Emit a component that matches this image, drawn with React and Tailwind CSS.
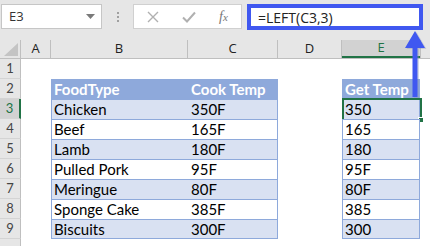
import React from "react";

const rows = [
  { food: "Chicken", cook: "350F", get: "350" },
  { food: "Beef", cook: "165F", get: "165" },
  { food: "Lamb", cook: "180F", get: "180" },
  { food: "Pulled Pork", cook: "95F", get: "95F" },
  { food: "Meringue", cook: "80F", get: "80F" },
  { food: "Sponge Cake", cook: "385F", get: "385" },
  { food: "Biscuits", cook: "300F", get: "300" },
];

const cols = [
  { key: "A", w: "w-[30px]" },
  { key: "B", w: "w-[137px]" },
  { key: "C", w: "w-[90px]" },
  { key: "D", w: "w-[64px]" },
  { key: "E", w: "w-[78px]" },
];

const RowHead = ({ n }) => (
  <div
    className={`w-[21px] h-[20px] shrink-0 flex items-center justify-center text-[13px] border-b border-[#d4d4d4] ${
      n === 3
        ? "bg-[#d2d2d2] border-r-2 border-r-[#217346] text-[#217346]"
        : "bg-[#e6e6e6] border-r border-r-[#bfbfbf] text-[#444]"
    }`}
  >
    {n}
  </div>
);

export default function App() {
  return (
    <div className="relative w-[430px] h-[246px] overflow-hidden bg-white font-['Open_Sans',sans-serif]">
      {/* Formula bar */}
      <div className="h-[40px] bg-[#e6e6e6] flex items-start pt-[4px] pl-[1px]">
        <div className="w-[101px] h-[25px] bg-white border border-[#c6c6c6] flex items-center justify-between pl-[7px] pr-[6px]">
          <span className="text-[13px] text-[#333]">E3</span>
          <svg width="9" height="5" viewBox="0 0 9 5">
            <path d="M0 0h9L4.5 5z" fill="#7a7a7a" />
          </svg>
        </div>
        <div className="w-[31px] h-[25px] flex flex-col items-center justify-center gap-[2px]">
          <span className="w-[2px] h-[2px] bg-[#a0a0a0]" />
          <span className="w-[2px] h-[2px] bg-[#a0a0a0]" />
          <span className="w-[2px] h-[2px] bg-[#a0a0a0]" />
        </div>
        <div className="w-[109px] h-[25px] bg-white border border-[#d0d0d0] flex items-center pl-[13px] gap-[23px]">
          <svg width="12" height="12" viewBox="0 0 12 12">
            <path d="M1 1l10 10M11 1L1 11" stroke="#b0b0b0" strokeWidth="1.4" />
          </svg>
          <svg width="14" height="12" viewBox="0 0 14 12">
            <path d="M1 6.5l4 4L13 1.5" stroke="#b0b0b0" strokeWidth="2" fill="none" />
          </svg>
          <span className="text-[14px] italic text-[#777] font-['Liberation_Serif',serif]">
            f<span className="text-[11px]">x</span>
          </span>
        </div>
        <div className="ml-[5px] w-[176px] h-[26px] bg-white border-[4px] border-[#4058f0] flex items-center pl-[7px]">
          <span className="text-[14px] text-[#222]">=LEFT(C3,3)</span>
        </div>
      </div>

      {/* Column headers */}
      <div className="flex h-[19px] bg-[#e6e6e6] border-b border-[#bfbfbf]">
        <div className="w-[21px] shrink-0 flex items-end justify-end border-r border-[#bfbfbf] pr-[2px] pb-[2px]">
          <svg width="14" height="13" viewBox="0 0 14 13">
            <path d="M14 0V13H0z" fill="#c4c4c4" />
          </svg>
        </div>
        {cols.map((c) => (
          <div
            key={c.key}
            className={`${c.w} shrink-0 flex items-center justify-center text-[13px] ${
              c.key === "E"
                ? "bg-[#d2d2d2] border-b-2 border-[#217346] text-[#217346]"
                : "border-r border-[#bfbfbf] text-[#222]"
            }`}
          >
            {c.key}
          </div>
        ))}
        <div className="flex-1 border-l border-[#bfbfbf]" />
      </div>

      {/* Rows */}
      <div className="flex flex-col font-['Lato',sans-serif] text-[15px] text-black">
        <div className="flex">
          <RowHead n={1} />
        </div>
        <div className="flex">
          <RowHead n={2} />
          <div className="w-[30px] shrink-0" />
          <div className="w-[227px] shrink-0 flex h-[20px] bg-[#8ea9db] text-white font-bold">
            <div className="w-[137px] pl-[3px] flex items-center">FoodType</div>
            <div className="w-[90px] pl-[3px] flex items-center">Cook Temp</div>
          </div>
          <div className="w-[64px] shrink-0" />
          <div className="w-[78px] shrink-0 h-[20px] bg-[#8ea9db] text-white font-bold pl-[3px] flex items-center">
            Get Temp
          </div>
        </div>
        {rows.map((r, i) => {
          const bg = i % 2 === 0 ? "bg-[#d9e1f2]" : "bg-white";
          return (
            <div key={r.food} className="flex">
              <RowHead n={i + 3} />
              <div className="w-[30px] shrink-0" />
              <div
                className={`w-[227px] shrink-0 flex h-[20px] ${bg} border-t border-[#8ea9db] border-x ${
                  i === rows.length - 1 ? "border-b" : ""
                }`}
              >
                <div className="w-[136px] pl-[2px] flex items-center">{r.food}</div>
                <div className="w-[89px] pl-[3px] flex items-center">{r.cook}</div>
              </div>
              <div className="w-[64px] shrink-0" />
              <div
                className={`relative w-[78px] shrink-0 h-[20px] ${bg} border-t border-x border-[#8ea9db] pl-[2px] flex items-center ${
                  i === rows.length - 1 ? "border-b" : ""
                }`}
              >
                {r.get}
                {i === 0 && (
                  <div className="absolute -left-[1px] -top-[2px] w-[80px] h-[23px] border-2 border-[#217346]">
                    <div className="absolute -right-[4px] -bottom-[4px] w-[6px] h-[6px] bg-[#217346] border border-white" />
                  </div>
                )}
              </div>
            </div>
          );
        })}
        <div className="flex">
          <div className="w-[21px] h-[20px] shrink-0 bg-[#e6e6e6] border-r border-[#bfbfbf]" />
        </div>
      </div>

      {/* Arrow */}
      <svg
        className="absolute left-[402px] top-[30px]"
        width="26"
        height="68"
        viewBox="0 0 26 68"
      >
        <path d="M13 1L3 18h7.5v49h5V18H23z" fill="#8a93b8" opacity="0.35" transform="translate(1.5 1)" />
        <path d="M13 1L3 18h7.5v49h5V18H23z" fill="#4058f0" />
      </svg>
    </div>
  );
}
